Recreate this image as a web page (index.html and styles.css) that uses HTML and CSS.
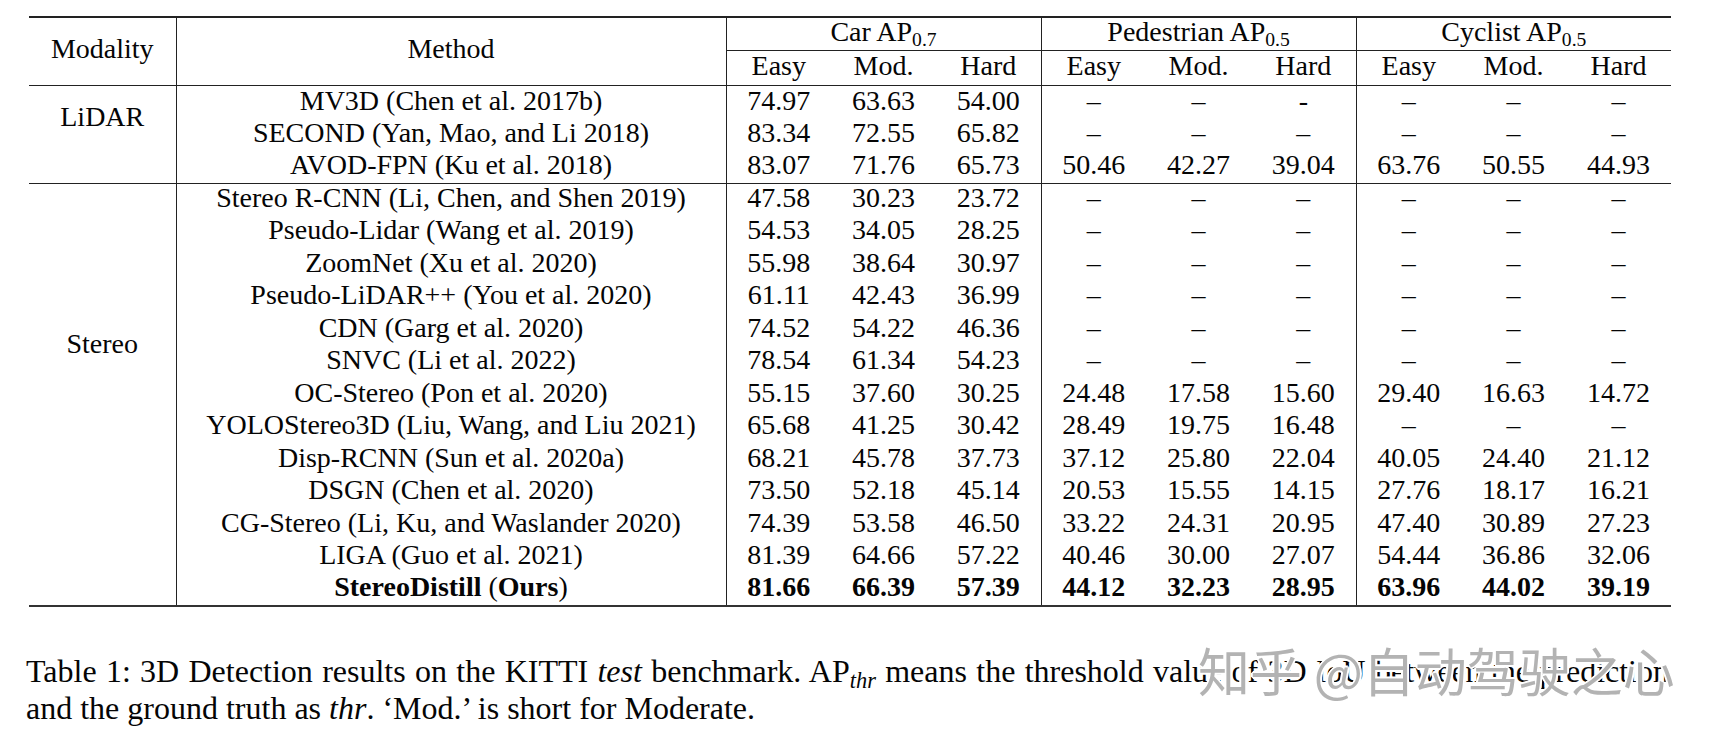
FILE: index.html
```html
<!DOCTYPE html>
<html lang="en">
<head>
<meta charset="utf-8">
<title>Table 1</title>
<link rel="stylesheet" href="styles.css">
</head>
<body>
<div class="page">
  <table class="results">
    <colgroup>
      <col class="c-mod"><col class="c-meth">
      <col class="c-num"><col class="c-num"><col class="c-num">
      <col class="c-num"><col class="c-num"><col class="c-num">
      <col class="c-num"><col class="c-num"><col class="c-num">
    </colgroup>
    <thead>
      <tr class="h1">
        <th rowspan="2" class="vr span">Modality</th>
        <th rowspan="2" class="vr span">Method</th>
        <th colspan="3" class="vr grp">Car AP<span class="sub">0.7</span></th>
        <th colspan="3" class="vr grp">Pedestrian AP<span class="sub">0.5</span></th>
        <th colspan="3" class="grp">Cyclist AP<span class="sub">0.5</span></th>
      </tr>
      <tr class="h2">
        <th>Easy</th><th>Mod.</th><th class="vr">Hard</th>
        <th>Easy</th><th>Mod.</th><th class="vr">Hard</th>
        <th>Easy</th><th>Mod.</th><th>Hard</th>
      </tr>
    </thead>
    <tbody class="lidar">
      <tr>
        <td rowspan="2" class="vr">LiDAR</td>
        <td class="vr">MV3D (Chen et al. 2017b)</td>
        <td>74.97</td><td>63.63</td><td class="vr">54.00</td>
        <td>–</td><td>–</td><td class="vr">-</td>
        <td>–</td><td>–</td><td>–</td>
      </tr>
      <tr>
        <td class="vr">SECOND (Yan, Mao, and Li 2018)</td>
        <td>83.34</td><td>72.55</td><td class="vr">65.82</td>
        <td>–</td><td>–</td><td class="vr">–</td>
        <td>–</td><td>–</td><td>–</td>
      </tr>
      <tr class="last">
        <td class="vr"></td>
        <td class="vr">AVOD-FPN (Ku et al. 2018)</td>
        <td>83.07</td><td>71.76</td><td class="vr">65.73</td>
        <td>50.46</td><td>42.27</td><td class="vr">39.04</td>
        <td>63.76</td><td>50.55</td><td>44.93</td>
      </tr>
    </tbody>
    <tbody class="stereo">
      <tr>
        <td rowspan="10" class="vr">Stereo</td>
        <td class="vr">Stereo R-CNN (Li, Chen, and Shen 2019)</td>
        <td>47.58</td><td>30.23</td><td class="vr">23.72</td>
        <td>–</td><td>–</td><td class="vr">–</td>
        <td>–</td><td>–</td><td>–</td>
      </tr>
      <tr>
        <td class="vr">Pseudo-Lidar (Wang et al. 2019)</td>
        <td>54.53</td><td>34.05</td><td class="vr">28.25</td>
        <td>–</td><td>–</td><td class="vr">–</td>
        <td>–</td><td>–</td><td>–</td>
      </tr>
      <tr>
        <td class="vr">ZoomNet (Xu et al. 2020)</td>
        <td>55.98</td><td>38.64</td><td class="vr">30.97</td>
        <td>–</td><td>–</td><td class="vr">–</td>
        <td>–</td><td>–</td><td>–</td>
      </tr>
      <tr>
        <td class="vr">Pseudo-LiDAR++ (You et al. 2020)</td>
        <td>61.11</td><td>42.43</td><td class="vr">36.99</td>
        <td>–</td><td>–</td><td class="vr">–</td>
        <td>–</td><td>–</td><td>–</td>
      </tr>
      <tr>
        <td class="vr">CDN (Garg et al. 2020)</td>
        <td>74.52</td><td>54.22</td><td class="vr">46.36</td>
        <td>–</td><td>–</td><td class="vr">–</td>
        <td>–</td><td>–</td><td>–</td>
      </tr>
      <tr>
        <td class="vr">SNVC (Li et al. 2022)</td>
        <td>78.54</td><td>61.34</td><td class="vr">54.23</td>
        <td>–</td><td>–</td><td class="vr">–</td>
        <td>–</td><td>–</td><td>–</td>
      </tr>
      <tr>
        <td class="vr">OC-Stereo (Pon et al. 2020)</td>
        <td>55.15</td><td>37.60</td><td class="vr">30.25</td>
        <td>24.48</td><td>17.58</td><td class="vr">15.60</td>
        <td>29.40</td><td>16.63</td><td>14.72</td>
      </tr>
      <tr>
        <td class="vr">YOLOStereo3D (Liu, Wang, and Liu 2021)</td>
        <td>65.68</td><td>41.25</td><td class="vr">30.42</td>
        <td>28.49</td><td>19.75</td><td class="vr">16.48</td>
        <td>–</td><td>–</td><td>–</td>
      </tr>
      <tr>
        <td class="vr">Disp-RCNN (Sun et al. 2020a)</td>
        <td>68.21</td><td>45.78</td><td class="vr">37.73</td>
        <td>37.12</td><td>25.80</td><td class="vr">22.04</td>
        <td>40.05</td><td>24.40</td><td>21.12</td>
      </tr>
      <tr>
        <td class="vr">DSGN (Chen et al. 2020)</td>
        <td>73.50</td><td>52.18</td><td class="vr">45.14</td>
        <td>20.53</td><td>15.55</td><td class="vr">14.15</td>
        <td>27.76</td><td>18.17</td><td>16.21</td>
      </tr>
      <tr>
        <td rowspan="3" class="vr"></td>
        <td class="vr">CG-Stereo (Li, Ku, and Waslander 2020)</td>
        <td>74.39</td><td>53.58</td><td class="vr">46.50</td>
        <td>33.22</td><td>24.31</td><td class="vr">20.95</td>
        <td>47.40</td><td>30.89</td><td>27.23</td>
      </tr>
      <tr>
        <td class="vr">LIGA (Guo et al. 2021)</td>
        <td>81.39</td><td>64.66</td><td class="vr">57.22</td>
        <td>40.46</td><td>30.00</td><td class="vr">27.07</td>
        <td>54.44</td><td>36.86</td><td>32.06</td>
      </tr>
      <tr class="ours">
        <td class="vr"><b>StereoDistill</b> (<b>Ours</b>)</td>
        <td><b>81.66</b></td><td><b>66.39</b></td><td class="vr"><b>57.39</b></td>
        <td><b>44.12</b></td><td><b>32.23</b></td><td class="vr"><b>28.95</b></td>
        <td><b>63.96</b></td><td><b>44.02</b></td><td><b>39.19</b></td>
      </tr>
    </tbody>
  </table>

  <p class="caption">Table 1: 3D Detection results on the KITTI <i>test</i> benchmark. AP<span class="csub"><i>thr</i></span> means the threshold value of 3D IoU between the prediction and the ground truth as <i>thr</i>. ‘Mod.’ is short for Moderate.</p>

  <div class="watermark">知乎 @自动驾驶之心</div>
</div>
</body>
</html>
```

FILE: styles.css
```css
html, body {
  margin: 0;
  padding: 0;
  background: #ffffff;
}

body {
  font-family: "Liberation Serif", "Times New Roman", serif;
  color: #050505;
}

.page {
  position: relative;
  width: 1640px;
  padding: 16px 0 0 29px;
}

.results {
  width: 1640px;
  border-collapse: collapse;
  table-layout: fixed;
  font-size: 28px;
  line-height: 1;
}

.c-mod { width: 147px; }
.c-meth { width: 550px; }
.c-num { width: 105px; }

.results th,
.results td {
  padding: 0 0 3px 0;
  text-align: center;
  font-weight: normal;
  white-space: nowrap;
  vertical-align: middle;
}

.results .vr {
  border-right: 1px solid #222;
}

.results tr.h1 {
  height: 29px;
}

.results tr.h2 {
  height: 35px;
}

.results .h1 th {
  border-top: 2px solid #222;
  padding-bottom: 4px;
}

.results .h1 .grp {
  border-bottom: 1px solid #222;
}

.results .h2 th {
  padding-bottom: 5px;
}

.results .h2 th,
.results th.span {
  border-bottom: 1px solid #222;
}

.results th.span {
  padding-bottom: 6px;
}

.results .lidar tr {
  height: 32.5px;
}

.results .lidar tr.last td {
  border-bottom: 1px solid #222;
}

.results .stereo tr {
  height: 32.5px;
}

.results .stereo tr.ours td {
  border-bottom: 2px solid #333;
}

.results .stereo td[rowspan="3"] {
  border-bottom: 2px solid #333;
}

.results .ours b {
  font-weight: bold;
}

.sub {
  font-size: 0.7em;
  line-height: 1;
  position: relative;
  top: 0.28em;
}

.caption {
  margin: 46px 0 0 -3px;
  width: 1643px;
  font-size: 32px;
  line-height: 37px;
  text-align: justify;
}

.csub {
  font-size: 0.7em;
  line-height: 1;
  position: relative;
  top: 0.3em;
}

.watermark {
  position: absolute;
  left: 1198px;
  top: 640px;
  font-family: "Noto Sans CJK SC", "Noto Sans", sans-serif;
  font-size: 52px;
  line-height: 60px;
  white-space: nowrap;
  color: rgba(160, 160, 160, 0.8);
  text-shadow:
    2px 0 0 #fff, -2px 0 0 #fff, 0 2px 0 #fff, 0 -2px 0 #fff,
    1px 1px 0 #fff, -1px -1px 0 #fff, 1px -1px 0 #fff, -1px 1px 0 #fff;
}
```
